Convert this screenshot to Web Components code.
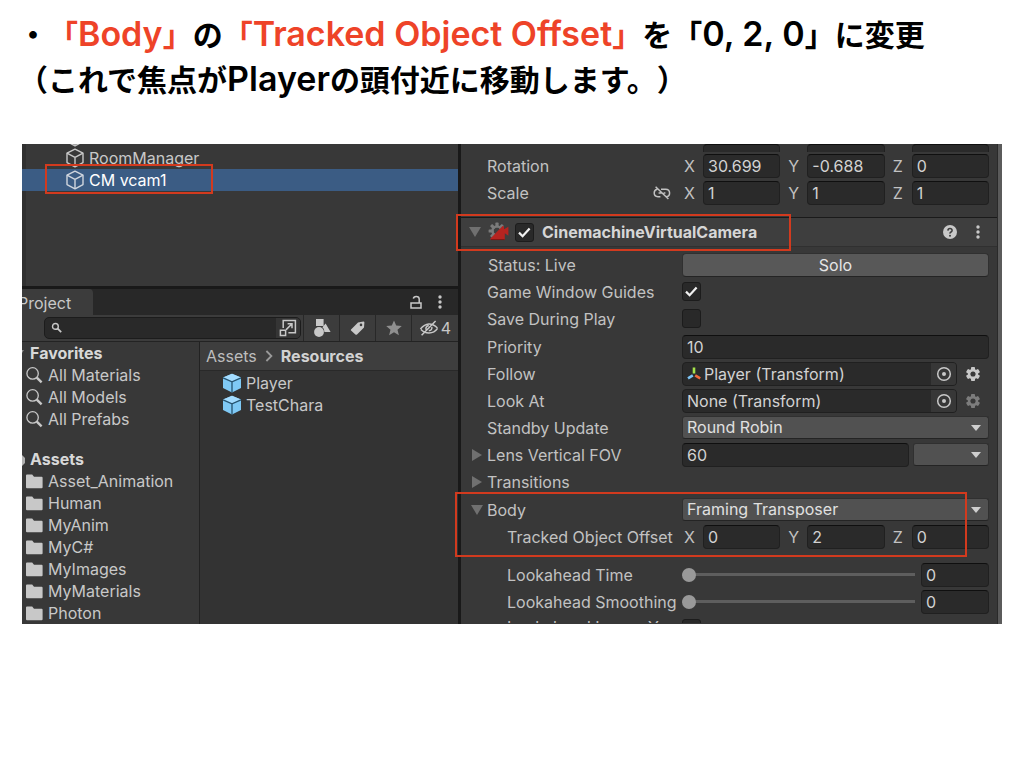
<!DOCTYPE html>
<html lang="ja">
<head>
<meta charset="utf-8">
<title>Tracked Object Offset</title>
<style>
body { margin: 0; background: #fff; }
</style>
</head>
<body>
<tutorial-slide></tutorial-slide>
<script>
const define = (name, css, html) => {
  customElements.define(name, class extends HTMLElement {
    connectedCallback() {
      if (this.shadowRoot) return;
      const root = this.attachShadow({ mode: 'open' });
      const body = typeof html === 'function' ? html(this) : html;
      root.innerHTML = `<style>*{box-sizing:border-box}${css}</style>${body}`;
    }
  });
};
const attr = (el, n) => el.getAttribute(n) || '';

/* ---------- icons ---------- */
const gear = (() => {
  let teeth = '';
  for (let i = 0; i < 8; i++) teeth += `<rect x="8.4" y="1.6" width="3.2" height="5" rx=".6" transform="rotate(${i * 45} 10 10)"/>`;
  return teeth;
})();
const gear6 = (() => {
  let teeth = '';
  for (let i = 0; i < 6; i++) teeth += `<rect x="6" y="1" width="4" height="4" rx=".8" transform="rotate(${i * 60} 8 8)"/>`;
  return teeth + '<circle cx="8" cy="8" r="3.9" fill="none" stroke="currentColor" stroke-width="2.6"/>';
})();
const ICONS = {
  cube: [20, 20, '<g fill="none" stroke="currentColor" stroke-width="1.4" stroke-linejoin="round"><path d="M10 1.2 18 5.2V14.6L10 18.8 2 14.6V5.2Z"/><path d="M2 5.2 10 9.4 18 5.2M10 9.4V18.8"/></g>'],
  prefab: [20, 20, '<path fill="#7fc9f5" d="M10 .8 19 4.6V15L10 19.4 1 15V4.6Z"/><path fill="#a3dcff" d="M10 .8 19 4.6 10 8.6 1 4.6Z"/><path d="M1 4.8 10 8.8 19 4.8M10 8.8V19.4" fill="none" stroke="#26536f" stroke-width="1.3"/>'],
  folder: [18, 18, '<path fill="currentColor" d="M0 3.4Q0 2.4 1 2.4H6.2L8 4.8H15.6Q16.6 4.8 16.6 5.8V15.2Q16.6 16.2 15.6 16.2H1Q0 16.2 0 15.2Z"/>'],
  loupe: [18, 18, '<circle cx="6.6" cy="7.4" r="5.7" fill="none" stroke="currentColor" stroke-width="1.3"/><path d="M10.8 11.6 15.6 16.4" stroke="currentColor" stroke-width="2.4"/>'],
  find: [12, 12, '<circle cx="4.4" cy="4.4" r="2.9" fill="none" stroke="currentColor" stroke-width="1.4"/><path d="M6.4 6.4 10.2 10.2" stroke="currentColor" stroke-width="1.8"/>'],
  down: [12, 10, '<path fill="currentColor" d="M0 0H12L6 10Z"/>'],
  right: [12, 12, '<path fill="currentColor" d="M1 0 11 6 1 12Z"/>'],
  drop: [10, 6, '<path fill="currentColor" d="M0 0H10L5 6Z"/>'],
  help: [14, 14, '<circle cx="7" cy="7" r="7" fill="currentColor"/><path d="M4.9 5.6Q5 3.6 7 3.6T9.1 5.4Q9.1 6.4 8 7T7 8.6" fill="none" stroke="#3c3c3c" stroke-width="1.5"/><circle cx="7" cy="10.7" r="1" fill="#3c3c3c"/>'],
  dots: [4, 14, '<g fill="currentColor"><circle cx="2" cy="2" r="1.7"/><circle cx="2" cy="7" r="1.7"/><circle cx="2" cy="12" r="1.7"/></g>'],
  lock: [14, 14, '<path fill="none" stroke="currentColor" stroke-width="1.5" d="M2 8H12V13H2ZM10.2 8V4Q10.2 1.4 7.2 1.4 4.6 1.4 4.4 3.6"/>'],
  open: [18, 18, '<path fill="none" stroke="currentColor" stroke-width="1.5" d="M4.2 9V1.6H16.4V13.8H9.4M1.4 11.2H6.6V16.4H1.4ZM7.2 10.6 13 4.8M8.6 4.8H13V9.2"/>'],
  shapes: [18, 18, '<g fill="currentColor"><path d="M3 0H10.6V7H3Z"/><circle cx="6" cy="13" r="4.9"/><path d="M12.6 4.4 17.6 13H11.4Q11.4 9.4 9.4 8.2Z"/></g>'],
  tag: [16, 16, '<path fill="currentColor" fill-rule="evenodd" d="M1 9.4 8 2.6 13.4 1.4Q14.4 1.4 14.4 2.4L14 7.4 7 14.4Q6.2 15 5.4 14.4L1 10.6Q.6 10 1 9.4ZM11 3.6A1.3 1.3 0 1 0 11 6.2 1.3 1.3 0 1 0 11 3.6Z"/>'],
  star: [16, 16, '<path fill="#8f8f8f" d="M8 .4 10.2 5.6 15.8 6 11.5 9.7 12.9 15.2 8 12.2 3.1 15.2 4.5 9.7 .2 6 5.8 5.6Z"/>'],
  hidden: [20, 16, '<path fill="none" stroke="currentColor" stroke-width="1.5" d="M1.4 9Q9.6-.4 18.4 8M2 9.6Q5 13 10 13 15.4 13 18.6 8.4M7 9.6Q6.4 6.4 9.8 5.6M12.8 7Q13.4 10.4 9.8 10.8M2.6 15.2 16.6 1"/>'],
  chevron: [8, 12, '<path fill="none" stroke="#9a9a9a" stroke-width="1.8" d="M1.4 1 6.4 6 1.4 11"/>'],
  unlink: [18, 14, '<path fill="none" stroke="currentColor" stroke-width="1.5" d="M4.2 3.2Q1.2 3.6 1.2 7T5 10.8H7.4M8 3.2H12.6Q16.6 3.4 16.6 7T13 10.8M5.6 7H8.4M10.6 7H12.4M2.6 .8 15.4 13"/>'],
  gear: [16, 16, `<g fill="currentColor">${gear6}</g>`],
  target: [16, 16, '<circle cx="8" cy="8" r="6.3" fill="none" stroke="currentColor" stroke-width="1.5"/><circle cx="8" cy="8" r="2" fill="currentColor"/>'],
  axes: [14, 14, '<path d="M7 .6V6.4" stroke="#a6e34b" stroke-width="2.6"/><path d="M5.8 8.4 1 11.4" stroke="#7cc4f5" stroke-width="2.6"/><path d="M8.2 8.4 13.2 11.4" stroke="#f0683c" stroke-width="2.6"/>'],
  vcam: [22, 20, `<g fill="#7b7b7b" transform="translate(-1 -1)">${gear}<circle cx="10" cy="10" r="4.6" fill="none" stroke="#7b7b7b" stroke-width="2.4"/></g><path fill="#b52420" d="M2 17 14.6 4 16 4.4V7.2L20.4 4.7V13.7L16.8 11.3V17.8H3Z"/><path d="M3 17.6H16.6" stroke="#7d1512" stroke-width="1"/>`]
};
define('ui-icon', ':host{display:inline-flex;flex:none}svg{display:block}', el => {
  const [w, h, body] = ICONS[attr(el, 'name')];
  return `<svg width="${w}" height="${h}" viewBox="0 0 ${w} ${h}" aria-hidden="true">${body}</svg>`;
});

/* ---------- inspector rows ---------- */
const tick = `url("data:image/svg+xml,%3Csvg xmlns='http://www.w3.org/2000/svg' width='19' height='19'%3E%3Cpath d='M4 9.6 7.6 13.2 14.6 5.4' fill='none' stroke='%23f0f0f0' stroke-width='2.2'/%3E%3C/svg%3E")`;
const boxCss = `
input[type=checkbox]{appearance:none;width:19px;height:19px;margin:0;flex:none;border:1px solid #1c1c1c;border-radius:3px;background:#292929 center/19px no-repeat}
input[type=checkbox]:checked{background-image:${tick}}`;
const rowCss = `
:host{display:grid;grid-template-columns:195px minmax(0,1fr);align-items:center;height:27px;padding:0 8px 0 26px;position:relative;color:#c2c2c2}
:host([indent]){padding-left:46px;grid-template-columns:175px minmax(0,1fr)}
:host([cut=top]){height:8px;align-items:end;overflow:hidden;padding-bottom:2px}
:host([cut=bottom]){height:8px;align-items:start;overflow:hidden;padding-top:4px}
:host([cut=bottom]) .name{line-height:16px}
.name{white-space:nowrap;display:flex;align-items:center}
.fold{position:absolute;left:10px;color:#707070;display:flex}
.ctl{display:flex;align-items:center;min-width:0}
input[type=text]{font:inherit;color:#d2d2d2;min-width:0;width:100%;height:24px;line-height:22px;margin:0;padding:0 4px;background:#2a2a2a;border:1px solid #202020;border-top-color:#0f0f0f;border-radius:4px;outline:0}
.pick{position:relative;flex:1;min-width:0;display:flex}
select{appearance:none;font:inherit;color:#e0e0e0;width:100%;height:23px;line-height:21px;margin:0;padding:0 4px;background:#515151;border:1px solid #303030;border-bottom-color:#242424;border-radius:3px}
.pick ui-icon{position:absolute;right:8px;top:9px;color:#cfcfcf;pointer-events:none}
${boxCss}`;
const fold = el => el.hasAttribute('fold') ? `<span class="fold"><ui-icon name="${attr(el, 'fold')}"></ui-icon></span>` : '';

define('text-row', rowCss + '.pick{flex:0 0 76px;margin-left:4px}', el => `${fold(el)}
  <label class="name" for="v">${attr(el, 'label')}</label>
  <div class="ctl"><input type="text" id="v" value="${attr(el, 'value')}">${el.hasAttribute('menu') ?
    '<span class="pick"><select aria-label="Lens preset"><option></option></select><ui-icon name="drop"></ui-icon></span>' : ''}</div>`);

define('check-row', rowCss, el => `<label class="name" for="v">${attr(el, 'label')}</label>
  <div class="ctl"><input type="checkbox" id="v" ${el.hasAttribute('checked') ? 'checked' : ''}></div>`);

define('select-row', rowCss, el => `${fold(el)}<label class="name" for="v">${attr(el, 'label')}</label>
  <div class="ctl"><span class="pick"><select id="v"><option>${attr(el, 'value')}</option></select><ui-icon name="drop"></ui-icon></span></div>`);

define('fold-row', rowCss, el => `${fold(el)}<span class="name">${attr(el, 'label')}</span>`);

define('vector-row', rowCss + `
.ctl{display:grid;grid-template-columns:repeat(3,minmax(0,1fr));gap:6px}
.axis{display:grid;grid-template-columns:21px minmax(0,1fr);align-items:center}
.axis span{padding-left:2px}
.link{position:absolute;left:192px}`, el => `<span class="name">${attr(el, 'label')}</span>
  ${el.hasAttribute('unlinked') ? '<ui-icon class="link" name="unlink"></ui-icon>' : ''}
  <div class="ctl">${['x', 'y', 'z'].map(a => el.hasAttribute('cut') ?
    `<div class="axis"><span></span><input type="text" aria-label="Position ${a}"></div>` :
    `<label class="axis"><span>${a.toUpperCase()}</span><input type="text" value="${attr(el, a)}"></label>`).join('')}</div>`);

define('object-row', rowCss + `
.box{flex:1;display:flex;gap:3px;position:relative;align-items:center;height:24px;background:#2a2a2a;border:1px solid #202020;border-radius:4px;overflow:hidden;padding-left:4px;min-width:0}
.box input[type=text]{border:0;padding:0;background:none;height:22px}
button{border:0;margin:0;padding:0;background:none;color:#c8c8c8;display:flex;align-items:center;justify-content:center}
.dot{width:25px;height:22px;background:#373737;flex:none}
.gear{width:32px;height:24px}
:host([dim]) .gear{color:#7c7c7c}`, el => `<label class="name" for="v">${attr(el, 'label')}</label>
  <div class="ctl"><span class="box">${el.hasAttribute('axes') ? '<ui-icon name="axes"></ui-icon>' : ''}
  <input type="text" id="v" readonly value="${attr(el, 'value')}"><button class="dot" aria-label="Pick object"><ui-icon name="target"></ui-icon></button></span>
  <button class="gear" aria-label="Options"><ui-icon name="gear"></ui-icon></button></div>`);

define('slider-row', rowCss + `
.ctl{gap:6px}
.ctl input[type=text]{flex:0 0 68px;width:68px}
input[type=range]{appearance:none;flex:1;min-width:0;margin:0;height:14px;background:linear-gradient(#5e5e5e,#5e5e5e) center/100% 3px no-repeat}
input[type=range]::-webkit-slider-thumb{appearance:none;width:14px;height:14px;border-radius:50%;background:#999}`, el => `
  <label class="name" for="v">${attr(el, 'label')}</label>
  <div class="ctl"><input type="range" id="v" min="0" max="1" step="any" value="${attr(el, 'value')}">
  <input type="text" aria-label="${attr(el, 'label')} value" value="${attr(el, 'value')}"></div>`);

define('status-row', rowCss + `
.name{padding-left:1px}
button{font:inherit;color:#e6e6e6;width:100%;height:24px;line-height:22px;padding:0;background:#585858;border:1px solid #303030;border-bottom-color:#242424;border-radius:4px}`,
  '<span class="name">Status: Live</span><div class="ctl"><button>Solo</button></div>');

/* ---------- annotation frame ---------- */
define('mark-box', ':host{display:block;position:absolute;border:2px solid #d23a1e;pointer-events:none;z-index:2}', '');

/* ---------- panels ---------- */
define('component-header', `
:host{display:flex;align-items:center;height:30px;position:relative;background:#3e3e3e;border-top:1px solid #1a1a1a;border-bottom:1px solid #303030;padding:0 17px 0 8px;color:#c8c8c8}
.arrow{color:#707070}
.cam{margin:0 5px 0 7px}
label{display:flex;align-items:center;gap:8px;font-weight:700;color:#d6d6d6;white-space:nowrap}
.end{margin-left:auto;display:flex;align-items:center;gap:19px}
mark-box{left:-5px;right:206px;top:-4px;height:37px}
button{border:0;background:none;color:inherit;padding:0;display:flex}
${boxCss}`, `
<ui-icon class="arrow" name="down"></ui-icon><ui-icon class="cam" name="vcam"></ui-icon>
<label><input type="checkbox" checked>CinemachineVirtualCamera</label>
<span class="end"><button aria-label="Help"><ui-icon name="help"></ui-icon></button><button aria-label="Menu"><ui-icon name="dots"></ui-icon></button></span>
<mark-box></mark-box>`);

define('inspector-panel', `
:host{display:flex;flex-direction:column;background:#383838;min-width:0;border-right:1px solid #2a2a2a}
component-header{margin:11px 0 4px}
.group{display:flex;flex-direction:column;gap:1px}
.marked{position:relative}
.marked mark-box{left:-6px;right:30px;top:-4px;bottom:-7px}
.more{padding-top:11px}`, `
<vector-row cut="top"></vector-row>
<vector-row label="Rotation" x="30.699" y="-0.688" z="0"></vector-row>
<vector-row label="Scale" x="1" y="1" z="1" unlinked></vector-row>
<component-header></component-header>
<div class="group">
  <div><status-row></status-row>
    <check-row label="Game Window Guides" checked></check-row>
    <check-row label="Save During Play"></check-row></div>
  <div><text-row label="Priority" value="10"></text-row>
    <object-row label="Follow" value="Player (Transform)" axes></object-row>
    <object-row label="Look At" value="None (Transform)" dim></object-row>
    <select-row label="Standby Update" value="Round Robin"></select-row>
    <text-row label="Lens Vertical FOV" value="60" fold="right" menu></text-row>
    <fold-row label="Transitions" fold="right"></fold-row></div>
  <div class="marked"><select-row label="Body" value="Framing Transposer" fold="down"></select-row>
    <vector-row label="Tracked Object Offset" indent x="0" y="2" z="0"></vector-row>
    <mark-box></mark-box></div>
</div>
<div class="more"><slider-row label="Lookahead Time" indent value="0"></slider-row>
  <slider-row label="Lookahead Smoothing" indent value="0"></slider-row>
  <check-row label="Lookahead Ignore Y" indent cut="bottom"></check-row></div>`);

define('list-item', `
:host{display:flex;align-items:center;height:22px;gap:4px;white-space:nowrap;position:relative;color:#c8c8c8}
:host([selected]){background:#3b5c84;color:#fff}
:host([selected]) ui-icon{color:#d0d6de}`, el => `<ui-icon name="${attr(el, 'icon')}"></ui-icon><span><slot></slot></span>${el.hasAttribute('marked') ? '<style>mark-box{left:23px;width:168px;top:-5px;height:30px}</style><mark-box></mark-box>' : ''}`);

define('hierarchy-panel', `
:host{display:block;background:linear-gradient(90deg,#303030 4px,#383838 4px);padding-bottom:95px}
.cut{height:3px;overflow:hidden;display:flex;align-items:end;padding-left:43px;color:#c8c8c8}
list-item{padding-left:43px}`, `
<div class="cut"><ui-icon name="cube"></ui-icon></div>
<list-item icon="cube">RoomManager</list-item>
<list-item icon="cube" selected marked>CM vcam1</list-item>`);

define('project-panel', `
:host{display:flex;flex-direction:column;flex:1;background:#383838;border-top:3px solid #191919;color:#c8c8c8}
.tabs{display:flex;align-items:center;height:26px;background:#282828;padding-right:16px;gap:15px}
.tab{width:71px;height:26px;line-height:28px;background:#3c3c3c;border-radius:0 4px 0 0;overflow:hidden;margin-right:auto;text-indent:-4px}
button{font:inherit;border:0;background:none;color:inherit;padding:0;display:flex;align-items:center;justify-content:center}
.tools{display:flex;height:27px;background:#3c3c3c;border-bottom:1px solid #232323}
.search{flex:1;display:flex;align-items:center;min-width:0;height:22px;margin:2px 2px 0 22px;background:#292929;border:1px solid #1c1c1c;border-radius:5px;padding-left:6px}
.search input{flex:1;min-width:0;font:inherit;color:inherit;background:none;border:0;padding:0 4px;outline:0}
.search button{width:24px;height:20px;background:#353535;border-radius:0 4px 4px 0}
.tools>button{width:36px;border-left:1px solid #282828}
.tools>button.count{width:47px;gap:2px}
.cols{flex:1;display:grid;grid-template-columns:178px minmax(0,1fr)}
.tree{border-right:1px solid #222;padding-left:4px}
.tree h3{margin:0;height:22px;line-height:22px;padding-left:4px;font-size:inherit;font-weight:700;color:#d8d8d8;position:relative}
.tree h3+list-item~h3{margin-top:18px}
.tree svg{position:absolute;left:-4px;top:6px}
.files{background:#333}
nav{display:flex;align-items:center;gap:8px;height:29px;padding-left:6px;background:#3e3e3e;border-bottom:1px solid #292929}
nav a{color:#bdbdbd;text-decoration:none}
nav b{font-weight:700;color:#d2d2d2}
.files list-item{padding-left:22px}
.items{padding-top:1px}`, `
<div class="tabs"><div class="tab">Project</div><button aria-label="Lock"><ui-icon name="lock"></ui-icon></button><button aria-label="Menu"><ui-icon name="dots"></ui-icon></button></div>
<div class="tools">
  <span class="search"><ui-icon name="find"></ui-icon><input type="text" aria-label="Search"><button aria-label="Open search"><ui-icon name="open"></ui-icon></button></span>
  <button aria-label="Type"><ui-icon name="shapes"></ui-icon></button>
  <button aria-label="Label"><ui-icon name="tag"></ui-icon></button>
  <button aria-label="Favorite"><ui-icon name="star"></ui-icon></button>
  <button class="count" aria-label="Hidden packages"><ui-icon name="hidden"></ui-icon>4</button>
</div>
<div class="cols">
  <div class="tree">
    <h3><svg width="3" height="10"><path d="M0 2H2L0 5Z" fill="#8a8a8a"/></svg>Favorites</h3>
    <list-item icon="loupe">All Materials</list-item>
    <list-item icon="loupe">All Models</list-item>
    <list-item icon="loupe">All Prefabs</list-item>
    <h3><svg width="4" height="12"><path d="M0 1 3 4V9L0 12Z" fill="#b0b0b0"/></svg>Assets</h3>
    ${['Asset_Animation', 'Human', 'MyAnim', 'MyC#', 'MyImages', 'MyMaterials', 'Photon'].map(n => `<list-item icon="folder">${n}</list-item>`).join('')}
  </div>
  <div class="files">
    <nav><a href="#assets">Assets</a><ui-icon name="chevron"></ui-icon><b>Resources</b></nav>
    <div class="items"><list-item icon="prefab">Player</list-item><list-item icon="prefab">TestChara</list-item></div>
  </div>
</div>`);

define('editor-window', `
:host{display:grid;grid-template-columns:minmax(0,436fr) minmax(0,537fr);column-gap:3px;background:#191919;border-right:4px solid #5b5b5b;overflow:hidden;font:16px/22px Inter,"Liberation Sans",sans-serif}
.left{display:flex;flex-direction:column;min-width:0}`, `
<div class="left"><hierarchy-panel></hierarchy-panel><project-panel></project-panel></div>
<inspector-panel></inspector-panel>`);

define('slide-title', `
:host{display:block}
h1{margin:0;font:700 30px/45px "Noto Sans CJK JP",sans-serif;color:#000;white-space:nowrap;text-spacing-trim:space-all}
em{font-style:normal;color:#ee4328}
span{font:600 34px/0 Inter,"Liberation Sans",sans-serif}`, `
<h1>・<em>「<span>Body</span>」</em>の<em>「<span>Tracked Object Offset</span>」</em>を「<span>0, 2, 0</span>」に変更<br>（これで焦点が<span>Player</span>の頭付近に移動します。）</h1>`);

define('tutorial-slide', `
:host{display:block}
slide-title{padding:11px 18px 0}
editor-window{margin:43px 22px 0}`, '<slide-title></slide-title><editor-window></editor-window>');
</script>
</body>
</html>
